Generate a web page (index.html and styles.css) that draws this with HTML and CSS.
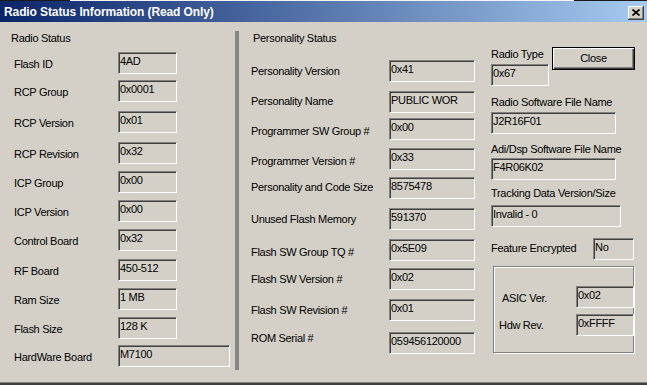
FILE: index.html
```html
<!DOCTYPE html>
<html>
<head>
<meta charset="utf-8">
<title>Radio Status Information</title>
<link rel="stylesheet" href="styles.css">
</head>
<body>
<div class="window">
  <div class="topline"></div>
  <div class="titlebar">
    <span class="title">Radio Status Information (Read Only)</span>
    <span class="xbtn"><svg width="8" height="7" viewBox="0 0 8 7"><path d="M0.5 0.5 L7.5 6.5 M7.5 0.5 L0.5 6.5" stroke="#000" stroke-width="1.6" fill="none"/></svg></span>
  </div>
  <div class="content">
    <section class="col-left">
      <div class="hdr">Radio Status</div>
      <div class="rows rows-left">
        <div class="row"><span class="lab">Flash ID</span><span class="box">4AD</span></div>
        <div class="row"><span class="lab">RCP Group</span><span class="box">0x0001</span></div>
        <div class="row"><span class="lab">RCP Version</span><span class="box">0x01</span></div>
        <div class="row"><span class="lab">RCP Revision</span><span class="box">0x32</span></div>
        <div class="row"><span class="lab">ICP Group</span><span class="box">0x00</span></div>
        <div class="row"><span class="lab">ICP Version</span><span class="box">0x00</span></div>
        <div class="row"><span class="lab">Control Board</span><span class="box">0x32</span></div>
        <div class="row"><span class="lab">RF Board</span><span class="box">450-512</span></div>
        <div class="row"><span class="lab">Ram Size</span><span class="box">1 MB</span></div>
        <div class="row"><span class="lab">Flash Size</span><span class="box">128 K</span></div>
        <div class="row"><span class="lab">HardWare Board</span><span class="box wide">M7100</span></div>
      </div>
    </section>
    <div class="divider"></div>
    <section class="col-mid">
      <div class="hdr">Personality Status</div>
      <div class="rows rows-mid">
        <div class="row"><span class="lab">Personality Version</span><span class="box">0x41</span></div>
        <div class="row"><span class="lab hi">Personality Name</span><span class="box">PUBLIC WOR</span></div>
        <div class="row"><span class="lab lo">Programmer SW Group #</span><span class="box">0x00</span></div>
        <div class="row"><span class="lab lo">Programmer Version #</span><span class="box">0x33</span></div>
        <div class="row"><span class="lab hi">Personality and Code Size</span><span class="box">8575478</span></div>
        <div class="row"><span class="lab">Unused Flash Memory</span><span class="box">591370</span></div>
        <div class="row"><span class="lab lo">Flash SW Group TQ #</span><span class="box">0x5E09</span></div>
        <div class="row"><span class="lab">Flash SW Version #</span><span class="box">0x02</span></div>
        <div class="row"><span class="lab">Flash SW Revision #</span><span class="box">0x01</span></div>
        <div class="row"><span class="lab top">ROM Serial #</span><span class="box">059456120000</span></div>
      </div>
    </section>
    <section class="col-right">
      <div class="type-row">
        <div class="type-field">
          <div class="rlab">Radio Type</div>
          <div class="box small type-box">0x67</div>
        </div>
        <button class="btn">Close</button>
      </div>
      <div class="rlab sw-lab">Radio Software File Name</div>
      <div class="box med sw-box">J2R16F01</div>
      <div class="rlab adi-lab">Adi/Dsp Software File Name</div>
      <div class="box med adi-box">F4R06K02</div>
      <div class="rlab trk-lab">Tracking Data Version/Size</div>
      <div class="box trk trk-box">Invalid - 0</div>
      <div class="feat-row">
        <span class="rlab feat-lab">Feature Encrypted</span>
        <span class="box feat-box">No</span>
      </div>
      <div class="group">
        <div class="grow asic-row"><span class="glab asic-lab">ASIC Ver.</span><span class="box gbox">0x02</span></div>
        <div class="grow hdw-row"><span class="glab hdw-lab">Hdw Rev.</span><span class="box gbox">0xFFFF</span></div>
      </div>
    </section>
  </div>
</div>
</body>
</html>
```

FILE: styles.css
```css
* { box-sizing: border-box; }
html, body { margin: 0; padding: 0; }
body {
  width: 647px;
  height: 385px;
  overflow: hidden;
  background: #d4d0c8;
  font-family: "Liberation Sans", Arial, sans-serif;
  font-size: 11px;
  letter-spacing: -0.3px;
  color: #000;
}
.window {
  width: 647px;
  height: 385px;
  display: flex;
  flex-direction: column;
}
.topline {
  height: 1px;
  background: linear-gradient(to right, #1a1a1a 0, #1a1a1a 70px, #f4f4f4 70px, #f4f4f4 574px, #1a1a1a 574px);
}
.titlebar {
  height: 21px;
  background: linear-gradient(to right, #0a246a, #a6caf0);
  display: flex;
  align-items: center;
  justify-content: space-between;
  padding: 0 3px 0 4px;
}
.title {
  color: #fff;
  font-weight: bold;
  font-size: 12px;
  letter-spacing: -0.1px;
}
.xbtn {
  width: 16px;
  height: 14px;
  margin-top: 2px;
  background: #d4d0c8;
  box-shadow: inset -1px -1px #404040, inset 1px 1px #fff, inset -2px -2px #808080;
  display: flex;
  align-items: center;
  justify-content: center;
  padding-bottom: 1px;
}
.content {
  display: flex;
  align-items: flex-start;
  border-bottom: 2px solid #404040;
  box-shadow: inset 0 -1px #808080;
  height: 363px;
}
.hdr {
  height: 13px;
  line-height: 13px;
}
.rows { display: grid; }
.row { display: flex; align-items: flex-start; }
.lab { line-height: 13px; white-space: nowrap; flex: none; }
.box {
  display: block;
  height: 22px;
  border-style: solid;
  border-width: 1px;
  border-color: #808080 #fff #fff #808080;
  box-shadow: inset 1px 1px #404040, inset -1px -1px #d4d0c8;
  padding: 2px 0 0 1px;
  line-height: 13px;
  white-space: nowrap;
  overflow: hidden;
  flex: none;
}

/* left column */
.col-left { width: 235px; padding-top: 10px; flex: none; }
.col-left .hdr { margin-left: 11px; }
.rows-left {
  margin-top: 7px;
  grid-template-rows: 28px 31px 31px 29px 29px 29px 30px 29px 29px 28px 22px;
}
.rows-left .lab { width: 118px; padding-left: 14px; padding-top: 6px; }
.rows-left .box { width: 59px; }
.rows-left .box.wide { width: 112px; }

.divider {
  width: 4px;
  height: 339px;
  margin-top: 9px;
  background: #868686;
  flex: none;
}

/* middle column */
.col-mid { width: 236px; padding-top: 10px; flex: none; }
.col-mid .hdr { margin-left: 14px; }
.rows-mid {
  margin-top: 15px;
  grid-template-rows: 31px 27px 30px 29px 31px 31px 29px 31px 33px 22px;
}
.rows-mid .lab { width: 150px; padding-left: 12px; padding-top: 5px; }
.rows-mid .lab.hi { padding-top: 4px; }
.rows-mid .lab.lo { padding-top: 7px; }
.rows-mid .lab.top { padding-top: 0; }
.rows-mid .box { width: 86px; }

/* right column */
.col-right {
  width: 144px;
  margin-left: 16px;
  padding-top: 25px;
  flex: none;
  display: flex;
  flex-direction: column;
  align-items: flex-start;
}
.rlab { line-height: 13px; white-space: nowrap; }
.type-row { display: flex; align-items: flex-start; }
.type-field { width: 58px; padding-top: 1px; }
.type-box { margin-top: 3px; }
.box.small { width: 58px; }
.btn {
  width: 83px;
  height: 23px;
  margin-left: 3px;
  background: #d4d0c8;
  border: 1px solid #000;
  box-shadow: inset 1px 1px #fff, inset -1px -1px #404040, inset -2px -2px #808080;
  font-family: "Liberation Sans", Arial, sans-serif;
  font-size: 11px;
  letter-spacing: -0.3px;
  color: #000;
  padding: 0 0 1px 0;
}
.sw-lab { margin-top: 10px; }
.sw-box { margin-top: 3px; }
.adi-lab { margin-top: 9px; }
.adi-box { margin-top: 2px; }
.box.med { width: 125px; }
.trk-lab { margin-top: 7px; }
.trk-box { margin-top: 5px; }
.box.trk { width: 130px; }
.feat-row {
  margin-top: 11px;
  width: 144px;
  display: flex;
  align-items: flex-start;
}
.feat-lab { padding-top: 4px; }
.feat-box { width: 41px; margin-left: auto; margin-right: 1px; }
.group {
  margin-top: 6px;
  margin-left: 2px;
  width: 141px;
  height: 87px;
  border: 1px solid #808080;
  box-shadow: inset 1px 1px #fff, 1px 1px #fff;
  padding-top: 19px;
  display: flex;
  flex-direction: column;
}
.grow { display: flex; align-items: flex-start; }
.asic-row { height: 28px; }
.glab { line-height: 13px; white-space: nowrap; }
.asic-lab { padding-left: 8px; padding-top: 6px; }
.hdw-lab { padding-left: 5px; padding-top: 5px; }
.gbox { width: 58px; margin-left: auto; margin-right: -1px; }
```
